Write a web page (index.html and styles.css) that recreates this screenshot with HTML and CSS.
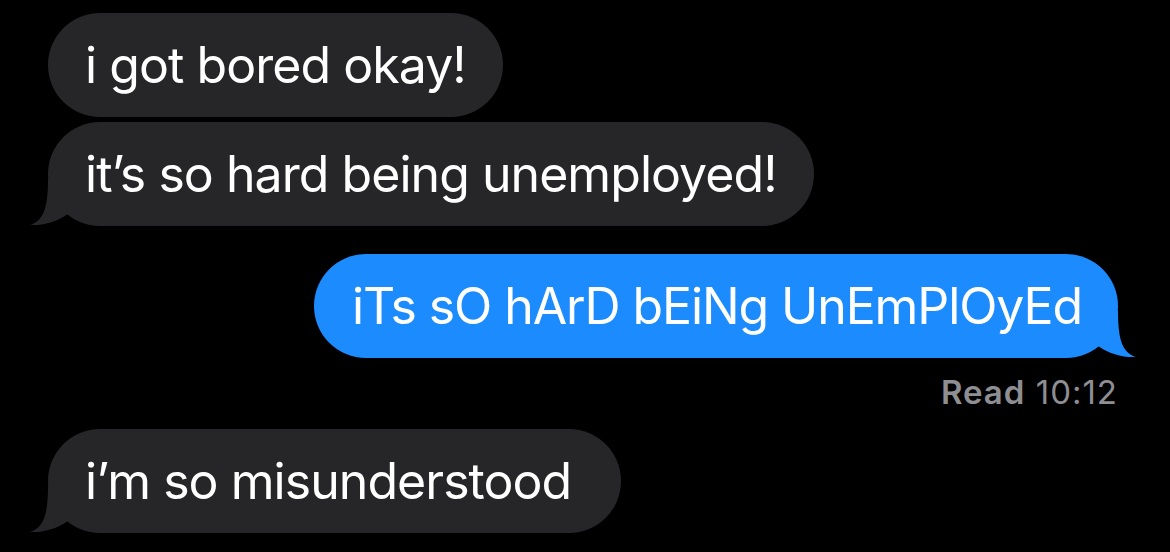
FILE: index.html
```html
<!DOCTYPE html>
<html lang="en">
<head>
<meta charset="utf-8">
<title>Messages</title>
<link rel="stylesheet" href="styles.css">
</head>
<body>
<main class="thread">
  <div class="msg in">i got bored okay!</div>
  <div class="msg in">it’s so hard being unemployed!<svg class="tail" viewBox="-18 -46 38 47" aria-hidden="true"><path d="M0,-46 C0,-16 -5,-4 -18,0 C-6,0.8 9,-3 20,-11 L20,-46 Z"/></svg></div>
  <div class="msg out">iTs sO hArD bEiNg UnEmPlOyEd<svg class="tail" viewBox="-18 -46 38 47" aria-hidden="true"><path d="M0,-46 C0,-16 -5,-4 -18,0 C-6,0.8 9,-3 20,-11 L20,-46 Z"/></svg></div>
  <div class="receipt"><b>Read</b> 10:12</div>
  <div class="msg in wide">i’m so misunderstood<svg class="tail" viewBox="-18 -46 38 47" aria-hidden="true"><path d="M0,-46 C0,-16 -5,-4 -18,0 C-6,0.8 9,-3 20,-11 L20,-46 Z"/></svg></div>
</main>
</body>
</html>
```
FILE: styles.css
```css
html, body {
  margin: 0;
  background: #000;
}

body {
  width: 1170px;
  height: 552px;
  overflow: hidden;
  font-family: Inter, "Liberation Sans", sans-serif;
  color: #fff;
}

.thread {
  display: flex;
  flex-direction: column;
  padding: 13px 52px 0 48px;
}

.msg {
  position: relative;
  padding: 22px 37px;
  border-radius: 52px;
  font-size: 50px;
  line-height: 60px;
  letter-spacing: -0.95px;
  white-space: nowrap;
}

.msg + .msg {
  margin-top: 5px;
}

.in {
  align-self: flex-start;
  background: #262629;
}

.wide {
  padding-right: 50px;
}

.out {
  align-self: flex-end;
  background: #1b8bfe;
  padding-left: 38px;
  padding-right: 36px;
  margin-top: 28px !important;
  letter-spacing: -1.1px;
}

.tail {
  position: absolute;
  bottom: 0;
  width: 38px;
  height: 47px;
  overflow: visible;
}

.in .tail {
  left: -18px;
  fill: #262629;
}

.out .tail {
  right: -18px;
  fill: #1b8bfe;
  transform: scaleX(-1);
}

.receipt {
  align-self: flex-end;
  margin-top: 14px;
  margin-bottom: 17px;
  font-size: 33px;
  line-height: 40px;
  letter-spacing: 1px;
  color: #8e8e93;
}

.receipt b {
  font-weight: 600;
}

.receipt + .msg {
  margin-top: 0;
}
```
